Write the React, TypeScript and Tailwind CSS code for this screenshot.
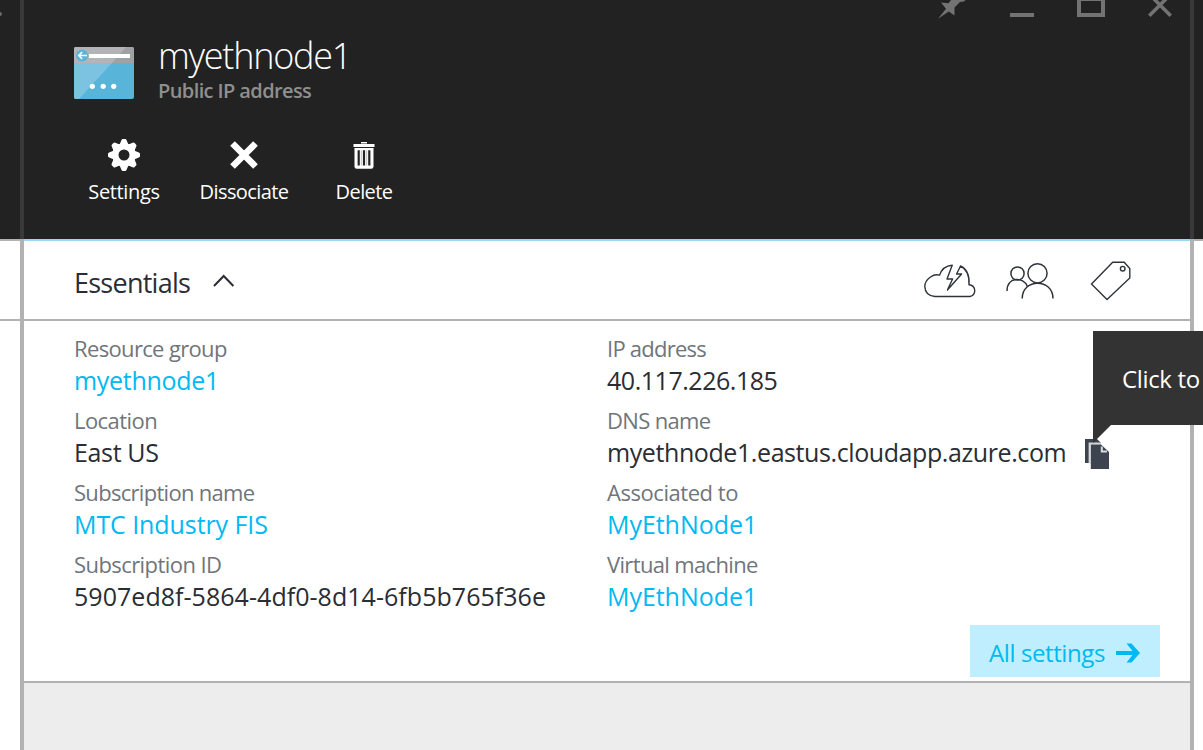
import type { ReactNode } from "react";

type Field = { label: string; labelClass: string; value: string; valueClass: string; link?: boolean; copy?: boolean };

const leftFields: Field[] = [
  { label: "Resource group", labelClass: "tracking-[-0.65px]", value: "myethnode1", valueClass: "tracking-[-0.3px]", link: true },
  { label: "Location", labelClass: "tracking-[-0.55px]", value: "East US", valueClass: "tracking-[-0.35px]" },
  { label: "Subscription name", labelClass: "tracking-[-0.7px]", value: "MTC Industry FIS", valueClass: "tracking-[-0.08px]", link: true },
  { label: "Subscription ID", labelClass: "tracking-[-0.57px]", value: "5907ed8f-5864-4df0-8d14-6fb5b765f36e", valueClass: "tracking-[0.04px]" },
];

const rightFields: Field[] = [
  { label: "IP address", labelClass: "tracking-[-0.75px]", value: "40.117.226.185", valueClass: "tracking-[-0.47px]" },
  { label: "DNS name", labelClass: "tracking-[-0.65px]", value: "myethnode1.eastus.cloudapp.azure.com", valueClass: "tracking-[-0.41px]", copy: true },
  { label: "Associated to", labelClass: "tracking-[-0.45px]", value: "MyEthNode1", valueClass: "tracking-[-0.05px]", link: true },
  { label: "Virtual machine", labelClass: "tracking-[-0.65px]", value: "MyEthNode1", valueClass: "tracking-[-0.05px]", link: true },
];

function CopyIcon() {
  return (
    <svg width="24" height="30" viewBox="0 0 24 30" className="mt-[4px] ml-[19px] shrink-0">
      <path d="M0 0H12L16 4H4V24H0Z" fill="#3d4450" />
      <path d="M4.5 24.5V4.5H16" fill="none" stroke="#d3d5d8" strokeWidth="1.8" />
      <path d="M5.8 5.5H16L24 13V30H5.8Z" fill="#3d4450" />
      <path d="M16.8 7.5V12.5H22" fill="none" stroke="#d9dbde" strokeWidth="2" />
    </svg>
  );
}

function FieldColumn({ fields }: { fields: Field[] }) {
  return (
    <dl className="flex flex-col gap-2">
      {fields.map((f) => (
        <div key={f.label} className="h-16">
          <dt className={`h-8 text-[22px] leading-8 text-[#70757b] ${f.labelClass}`}>{f.label}</dt>
          <dd className={`flex h-8 items-center text-[25px] leading-8 ${f.link ? "text-[#00b9f2]" : "text-[#2a2d33]"}`}>
            <span className={f.valueClass}>{f.value}</span>
            {f.copy && <CopyIcon />}
          </dd>
        </div>
      ))}
    </dl>
  );
}

function BrowserIcon() {
  return (
    <svg width="60" height="52" viewBox="0 0 60 52">
      <rect width="60" height="52" rx="2" fill="#59b4d9" />
      <path d="M0 16V2Q0 0 2 0H58Q60 0 60 2V16Z" fill="#a0a1a2" />
      <path d="M0 16V2Q0 0 2 0H52L38 16Z" fill="#b3b4b7" />
      <path d="M0 16H38L5 52H2Q0 52 0 50Z" fill="#7bc3e1" />
      <circle cx="8" cy="8.5" r="6" fill="#59b4d9" />
      <path d="M13 8.5H5M8.2 5L4.7 8.5L8.2 12" fill="none" stroke="#fff" strokeWidth="1.5" />
      <rect x="15" y="7" width="41" height="4" fill="#fff" />
      <circle cx="18.3" cy="39.3" r="2.6" fill="#fff" />
      <circle cx="29.2" cy="39.3" r="2.6" fill="#fff" />
      <circle cx="39.7" cy="39.3" r="2.6" fill="#fff" />
    </svg>
  );
}

function GearIcon() {
  const teeth = [0, 45, 90, 135, 180, 225, 270, 315];
  return (
    <svg width="32" height="32" viewBox="-16 -16 32 32" fill="#fff">
      {teeth.map((a) => (
        <path key={a} d="M-4.6 -10L-2.6 -14.8Q-2.2 -16 -1 -16H1Q2.2 -16 2.6 -14.8L4.6 -10Z" transform={`rotate(${a})`} />
      ))}
      <circle r="8.6" fill="none" stroke="#fff" strokeWidth="6.2" />
    </svg>
  );
}

function CrossIcon() {
  return (
    <svg width="32" height="32" viewBox="0 0 32 32">
      <path d="M4.500 4.500L27.500 27.500M27.500 4.500L4.500 27.500" stroke="#fff" strokeWidth="6.6" />
    </svg>
  );
}

function TrashIcon() {
  return (
    <svg width="32" height="32" viewBox="0 0 32 32">
      <rect x="13" y="3" width="6" height="1.5" fill="#fff" />
      <rect x="5.5" y="5" width="21" height="3" fill="#fff" />
      <path d="M6.5 9H25.5V27.5Q25.5 29.8 23.3 29.8H8.7Q6.5 29.8 6.5 27.5Z" fill="#fff" />
      <path d="M10.7 11.3V26.5M16 11.3V26.5M21.3 11.3V26.5" stroke="#222" strokeWidth="2.2" />
      <path d="M13.3 11.3V26.5M18.7 11.3V26.5" stroke="#222" strokeWidth="0.6" opacity="0.5" />
    </svg>
  );
}

function Command({ label, className, children }: { label: string; className: string; children: ReactNode }) {
  return (
    <button className="flex w-[120px] flex-col items-center">
      {children}
      <span className={`mt-[5px] block h-8 text-[20px] leading-8 text-white ${className}`}>{label}</span>
    </button>
  );
}

function WindowControls() {
  return (
    <div className="flex h-5 justify-end pr-[18px]">
      <svg width="28" height="20" viewBox="0 0 28 20" fill="#737373">
        <path d="M0 18.8L8 8.8L3 2.5L10.5 3.2L13 0H27.5L26 1.5L22 2L16.5 7.6V15.5L10.8 11.6Z" />
      </svg>
      <svg width="24" height="20" viewBox="0 0 24 20" className="ml-[44px]">
        <rect y="13" width="24" height="4" fill="#737373" />
      </svg>
      <svg width="28" height="20" viewBox="0 0 28 20" className="ml-[43px]">
        <path d="M0 0H28V17H0ZM4 1V13H24V1Z" fill="#737373" fillRule="evenodd" />
      </svg>
      <svg width="24" height="20" viewBox="0 0 24 20" className="ml-[43px]">
        <path d="M1.3 15.7L19 -2M22.7 15.7L5 -2" stroke="#737373" strokeWidth="3.5" />
      </svg>
    </div>
  );
}

function CloudIcon() {
  return (
    <svg width="54" height="40" viewBox="0 0 54 40" fill="none" stroke="#2f343b" strokeWidth="1.4">
      <path d="M29.2 4.2Q19.5 5 16.6 14.1Q12 12.8 7.5 16Q1.8 20 1.8 25.5Q2.2 34.8 12 35.5H47Q51.6 34.4 51.8 29.5Q51.2 24 46 23.7Q47 9.5 37.5 5L33.6 13H38.6L24.4 29L29.6 18H24Z" strokeLinejoin="round" />
    </svg>
  );
}

function UsersIcon() {
  return (
    <svg width="50" height="40" viewBox="0 0 50 40" fill="none" stroke="#2f343b" strokeWidth="1.5">
      <circle cx="12.5" cy="12.5" r="6.6" />
      <circle cx="32.5" cy="12.3" r="9.6" />
      <path d="M2 30C2 15.5 18.5 15.5 22.5 25.5" />
      <path d="M17.2 37.5C17.2 17 48 17 48 37.5" />
    </svg>
  );
}

function TagIcon() {
  return (
    <svg width="44" height="44" viewBox="0 0 44 44" fill="none" stroke="#2f343b" strokeWidth="1.4">
      <path d="M2.5 25L23.7 3.3H35.2L40.8 9.5V19L18 40.5Z" />
      <circle cx="33.7" cy="9.7" r="2.3" />
    </svg>
  );
}

function Tooltip() {
  return (
    <div className="absolute top-[331px] left-[1093px] flex h-[94px] w-[110px] items-center bg-[#333] pt-[1px] pl-[29px] text-[24px] whitespace-nowrap text-white">
      <span className="tracking-[-0.35px]">Click to</span>
      <svg width="18" height="19" viewBox="0 0 18 19" className="absolute top-[94px] left-0">
        <path d="M0 0H18L0 18Z" fill="#333" />
      </svg>
    </div>
  );
}

function Divider() {
  return (
    <div className="flex w-1 shrink-0 flex-col">
      <div className="h-[239px] bg-[#393939]" />
      <div className="flex-1 bg-[#b2b2b2]" />
    </div>
  );
}

export default function App() {
  return (
    <div className="relative flex h-[750px] w-[1203px] overflow-hidden bg-white font-['Open_Sans','Noto_Sans',sans-serif]">
      <aside className="flex w-5 shrink-0 flex-col">
        <div className="h-[239px] bg-[#222] pt-[12px]">
          <div className="h-1 w-[2px] rounded-r-full bg-[#6b6b6b]" />
        </div>
        <div className="h-[82px] border-y-2 border-[#b2b2b2]" />
      </aside>
      <Divider />
      <main className="flex w-[1166px] shrink-0 flex-col">
        <header className="h-[239px] shrink-0 bg-[#222]">
          <WindowControls />
          <div className="mt-[11px] flex h-[76px] pl-[50px]">
            <div className="pt-4">
              <BrowserIcon />
            </div>
            <div className="pt-[2px] pl-[24px]">
              <h1 className="h-[46px] text-[36px] leading-[46px] font-light tracking-[-1.25px] text-white">myethnode1</h1>
              <p className="h-7 text-[20px] leading-[24px] font-semibold tracking-[-0.6px] text-[#8f8f8f]">Public IP address</p>
            </div>
          </div>
          <div className="mt-[32px] flex pl-[40px]">
            <Command label="Settings" className="tracking-[-0.35px]"><GearIcon /></Command>
            <Command label="Dissociate" className="tracking-[-0.6px]"><CrossIcon /></Command>
            <Command label="Delete" className="tracking-[-0.6px]"><TrashIcon /></Command>
          </div>
        </header>
        <section className="flex h-[82px] shrink-0 items-center border-t-2 border-b-2 border-t-[#9bd6f3] border-b-[#b2b2b2] pt-[2px] pl-[50px]">
          <h2 className="pt-[4px] text-[27px] leading-8 tracking-[-0.75px] text-[#2a2d33]">Essentials</h2>
          <svg width="22" height="14" viewBox="0 0 22 14" className="ml-[23px]">
            <path d="M1 12L10.7 2L20.4 12" fill="none" stroke="#2a2d33" strokeWidth="2" />
          </svg>
          <div className="ml-auto flex items-center pr-[57px]">
            <CloudIcon />
            <div className="ml-[28px]"><UsersIcon /></div>
            <div className="ml-[34px]"><TagIcon /></div>
          </div>
        </section>
        <section className="h-[362px] shrink-0 border-b-2 border-[#b2b2b2] pt-[11px]">
          <div className="grid grid-cols-[533px_1fr] pl-[50px]">
            <FieldColumn fields={leftFields} />
            <FieldColumn fields={rightFields} />
          </div>
          <div className="mt-[13px] flex justify-end pr-[30px]">
            <button className="flex h-[52px] w-[190px] items-center bg-[#bfeffe] pl-[19px] text-[24px] text-[#00b9f2]">
              <span className="pt-[3px] tracking-[-0.4px]">All settings</span>
              <svg width="24" height="20" viewBox="0 0 24 20" className="mt-[3px] ml-[11px]">
                <path d="M0 8H16.5L10.5 0.5H15.5L24 10L15.5 19.5H10.5L16.5 12H0Z" fill="#00b9f2" />
              </svg>
            </button>
          </div>
        </section>
        <div className="flex-1 bg-[#ededed]" />
      </main>
      <Divider />
      <aside className="flex-1">
        <div className="h-[241px] border-b-2 border-[#b2b2b2] bg-[#222]" />
      </aside>
      <Tooltip />
    </div>
  );
}
